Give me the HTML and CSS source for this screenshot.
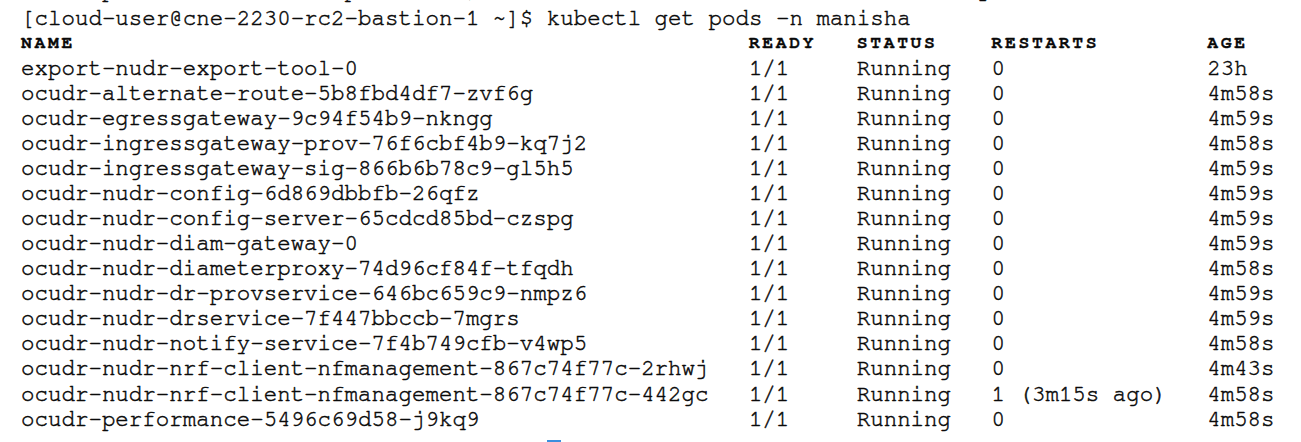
FILE: index.html
```html
<!DOCTYPE html>
<html>
<head>
<meta charset="utf-8">
<link rel="stylesheet" href="styles.css">
</head>
<body>
<div class="term">
  <div class="line partial">     ep in manisha namespace   ok, which ok wait   in  ocudr check    ay</div>
  <div class="line">[cloud-user@cne-2230-rc2-bastion-1 ~]$ kubectl get pods -n manisha</div>
  <div class="row head"><span>NAME</span><span>READY</span><span>STATUS</span><span>RESTARTS</span><span>AGE</span></div>
  <div class="row"><span>export-nudr-export-tool-0</span><span>1/1</span><span>Running</span><span>0</span><span>23h</span></div>
  <div class="row"><span>ocudr-alternate-route-5b8fbd4df7-zvf6g</span><span>1/1</span><span>Running</span><span>0</span><span>4m58s</span></div>
  <div class="row"><span>ocudr-egressgateway-9c94f54b9-nkngg</span><span>1/1</span><span>Running</span><span>0</span><span>4m59s</span></div>
  <div class="row"><span>ocudr-ingressgateway-prov-76f6cbf4b9-kq7j2</span><span>1/1</span><span>Running</span><span>0</span><span>4m58s</span></div>
  <div class="row"><span>ocudr-ingressgateway-sig-866b6b78c9-gl5h5</span><span>1/1</span><span>Running</span><span>0</span><span>4m59s</span></div>
  <div class="row"><span>ocudr-nudr-config-6d869dbbfb-26qfz</span><span>1/1</span><span>Running</span><span>0</span><span>4m59s</span></div>
  <div class="row"><span>ocudr-nudr-config-server-65cdcd85bd-czspg</span><span>1/1</span><span>Running</span><span>0</span><span>4m59s</span></div>
  <div class="row"><span>ocudr-nudr-diam-gateway-0</span><span>1/1</span><span>Running</span><span>0</span><span>4m59s</span></div>
  <div class="row"><span>ocudr-nudr-diameterproxy-74d96cf84f-tfqdh</span><span>1/1</span><span>Running</span><span>0</span><span>4m58s</span></div>
  <div class="row"><span>ocudr-nudr-dr-provservice-646bc659c9-nmpz6</span><span>1/1</span><span>Running</span><span>0</span><span>4m59s</span></div>
  <div class="row"><span>ocudr-nudr-drservice-7f447bbccb-7mgrs</span><span>1/1</span><span>Running</span><span>0</span><span>4m59s</span></div>
  <div class="row"><span>ocudr-nudr-notify-service-7f4b749cfb-v4wp5</span><span>1/1</span><span>Running</span><span>0</span><span>4m58s</span></div>
  <div class="row"><span>ocudr-nudr-nrf-client-nfmanagement-867c74f77c-2rhwj</span><span>1/1</span><span>Running</span><span>0</span><span>4m43s</span></div>
  <div class="row"><span>ocudr-nudr-nrf-client-nfmanagement-867c74f77c-442gc</span><span>1/1</span><span>Running</span><span>1 (3m15s ago)</span><span>4m58s</span></div>
  <div class="row"><span>ocudr-performance-5496c69d58-j9kq9</span><span>1/1</span><span>Running</span><span>0</span><span>4m58s</span></div>
  <div class="cursor"></div>
</div>
</body>
</html>
```

FILE: styles.css
```css
html, body {
  margin: 0;
  padding: 0;
  background: #ffffff;
}

html {
  overflow: hidden;
}

.term {
  margin-top: -22.5px;
  padding-left: 21px;
  font-family: "Nimbus Mono PS", "Nimbus Mono L", "FreeMono", "Courier 10 Pitch", "Courier", "Liberation Mono", monospace;
  font-size: 22.47px;
  line-height: 25.07px;
  color: #0a0a0a;
  -webkit-text-stroke: 0.5px #0a0a0a;
}

.line {
  white-space: pre;
  height: 25.07px;
}

.line.partial {
  height: 28.07px;
}

.row {
  display: grid;
  grid-template-columns: 727.9px 107.8px 134.8px 215.7px auto;
  height: 25.07px;
  white-space: pre;
}

.head span {
  font-size: 18px;
  font-weight: bold;
  letter-spacing: 2.68px;
  line-height: 25px;
  -webkit-text-stroke: 0.3px #0a0a0a;
}

.cursor {
  margin-top: 8px;
  margin-left: 526px;
  width: 14px;
  height: 2px;
  background: #3b8fde;
}
```
